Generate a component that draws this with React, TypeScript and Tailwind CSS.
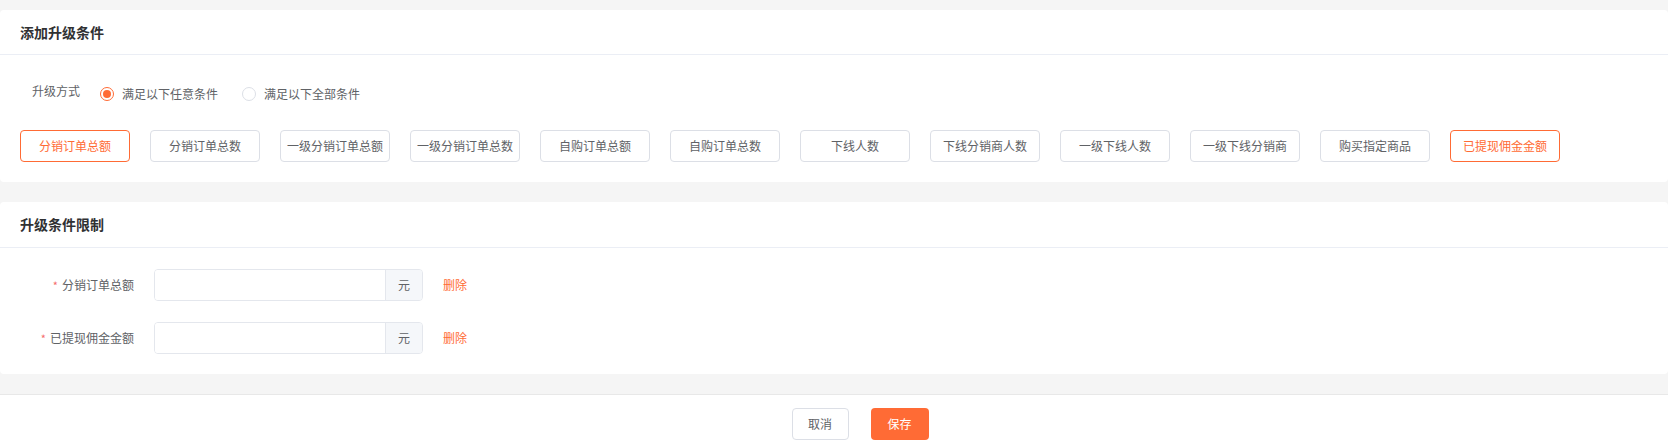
import React from "react";

const conditions = [
  { label: "分销订单总额", active: true },
  { label: "分销订单总数", active: false },
  { label: "一级分销订单总额", active: false },
  { label: "一级分销订单总数", active: false },
  { label: "自购订单总额", active: false },
  { label: "自购订单总数", active: false },
  { label: "下线人数", active: false },
  { label: "下线分销商人数", active: false },
  { label: "一级下线人数", active: false },
  { label: "一级下线分销商", active: false },
  { label: "购买指定商品", active: false },
  { label: "已提现佣金金额", active: true },
];

const limits = ["分销订单总额", "已提现佣金金额"];

export default function App() {
  return (
    <div
      className="w-[1668px] h-[444px] bg-[#f5f5f5] pt-[10px] flex flex-col overflow-hidden"
      style={{ fontFamily: '"Noto Sans CJK SC", "Noto Sans", sans-serif' }}
    >
      {/* Card 1 */}
      <div className="bg-white rounded-[4px]">
        <div className="h-[45px] flex items-center px-[20px] border-b border-[#ebeef5] text-[14px] font-bold text-[#303133]">
          添加升级条件
        </div>
        <div className="pt-[23px] pb-[20px]">
          <div className="flex items-center h-[32px] pl-[32px] text-[12px] text-[#606266]">
            <span className="mr-[20px] mb-[6px]">升级方式</span>
            <label className="flex items-center gap-[8px] mr-[24px]">
              <span className="w-[14px] h-[14px] rounded-full border border-[#ff6b35] flex items-center justify-center bg-white">
                <span className="w-[8px] h-[8px] rounded-full bg-[#ff6b35]" />
              </span>
              <span>满足以下任意条件</span>
            </label>
            <label className="flex items-center gap-[8px]">
              <span className="w-[14px] h-[14px] rounded-full border border-[#dcdfe6] bg-white" />
              <span>满足以下全部条件</span>
            </label>
          </div>
          <div className="flex gap-[20px] px-[20px] mt-[20px]">
            {conditions.map((c) => (
              <div
                key={c.label}
                className={
                  c.active
                    ? "w-[110px] h-[32px] rounded-[4px] border border-[#ff6b35] text-[#ff6b35] text-[12px] flex items-center justify-center whitespace-nowrap"
                    : "w-[110px] h-[32px] rounded-[4px] border border-[#dcdfe6] text-[#606266] text-[12px] flex items-center justify-center whitespace-nowrap"
                }
              >
                {c.label}
              </div>
            ))}
          </div>
        </div>
      </div>

      {/* Card 2 */}
      <div className="bg-white rounded-[4px] mt-[20px]">
        <div className="h-[46px] flex items-center px-[20px] border-b border-[#ebeef5] text-[14px] font-bold text-[#303133]">
          升级条件限制
        </div>
        <div className="pt-[21px] pb-[20px] flex flex-col gap-[21px]">
          {limits.map((l) => (
            <div key={l} className="flex items-center h-[32px] text-[12px]">
              <div className="w-[134px] flex justify-end items-center text-[#606266]">
                <span className="text-[#f56c6c] mr-[4px] text-[11px]">*</span>
                <span>{l}</span>
              </div>
              <div className="ml-[20px] w-[269px] h-[32px] flex border border-[#e4e7ed] rounded-[4px] overflow-hidden">
                <div className="flex-1 bg-white" />
                <div className="w-[37px] bg-[#f5f7fa] border-l border-[#e4e7ed] flex items-center justify-center text-[#606266]">
                  元
                </div>
              </div>
              <span className="ml-[20px] text-[#ff6b35] cursor-pointer">删除</span>
            </div>
          ))}
        </div>
      </div>

      {/* Footer */}
      <div className="mt-[20px] flex-1 bg-white border-t border-[#e8e8e8] flex justify-center pl-[52px] pt-[13px]">
        <div className="flex gap-[22px]">
          <button className="w-[57px] h-[32px] rounded-[4px] border border-[#dcdfe6] bg-white text-[12px] text-[#606266]">
            取消
          </button>
          <button className="w-[58px] h-[32px] rounded-[4px] bg-[#ff6b35] text-[12px] text-white">
            保存
          </button>
        </div>
      </div>
    </div>
  );
}
